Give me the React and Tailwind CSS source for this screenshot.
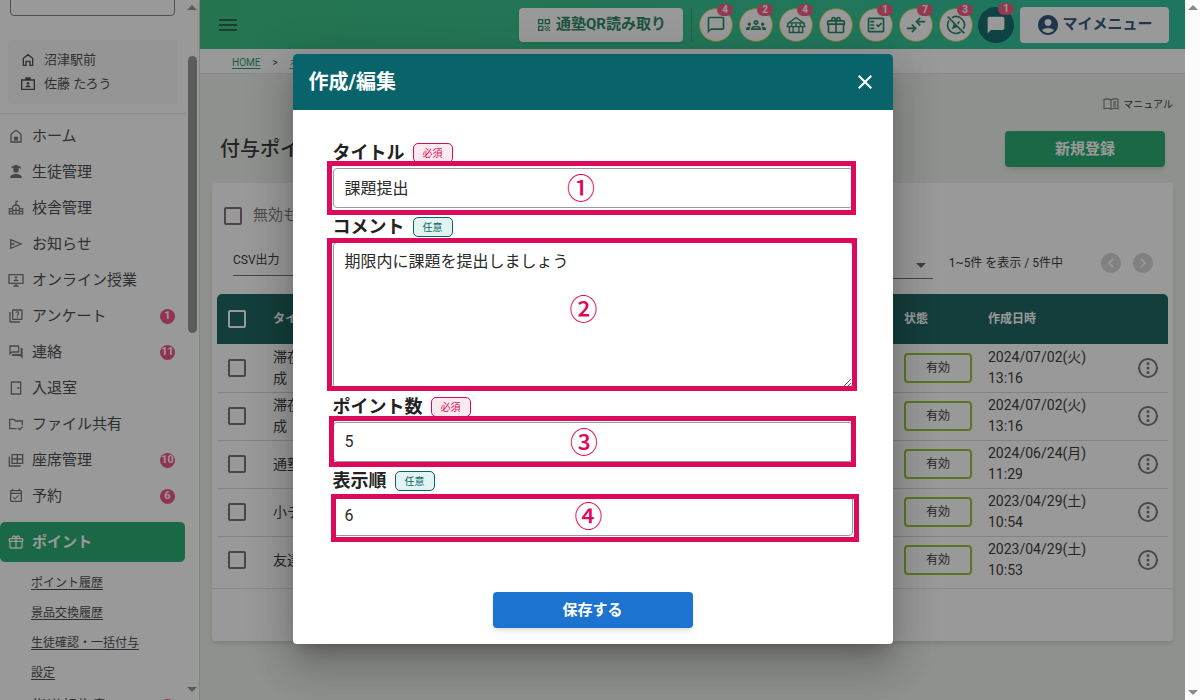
import { useState } from 'react';
import {
    MdMenu, MdOutlineChatBubbleOutline, MdChatBubble, MdOutlineGroups, MdOutlineFactCheck,
    MdAccountCircle, MdOutlineQuiz, MdOutlineForum, MdOutlineSensorDoor, MdOutlineEventAvailable,
    MdClose, MdQrCode, MdArrowDropDown, MdChevronLeft, MdChevronRight,
} from 'react-icons/md';

const Svg = ({ children, className = 'w-4 h-4', width = 2 }) => (
    <svg viewBox="0 0 24 24" className={className} fill="none" stroke="currentColor" strokeWidth={width} aria-hidden="true">
        {children}
    </svg>
);

const HouseIcon = ({ className }) => (
    <Svg className={className}>
        <path d="M5 20V9.500L12 4l7 5.500V20h-4v-6H9v6z" />
    </Svg>
);

const HomeIcon = () => (
    <Svg>
        <path d="M4.500 21V9.500L12 3.500l7.500 6V21z" />
        <path d="M9 13h6v6H9z" fill="currentColor" stroke="none" />
    </Svg>
);

const NameTagIcon = ({ className }) => (
    <Svg className={className}>
        <path d="M2.500 6h19v14h-19z" />
        <path d="M8 2h8v4H8z" fill="currentColor" stroke="none" />
        <circle cx="12" cy="11" r="2" fill="currentColor" stroke="none" />
        <path d="M8 17c0-4 8-4 8 0z" fill="currentColor" stroke="none" />
    </Svg>
);

const StudentIcon = () => (
    <Svg>
        <g fill="currentColor" stroke="none">
            <path d="M12 1l8 3.500-1 .5v3h-1V5.500L16 6.500V9a4 4 0 0 1-8 0V6.500L4 4.500z" />
            <path d="M3 21c0-8 18-8 18 0z" />
        </g>
    </Svg>
);

const SchoolIcon = () => (
    <Svg width="1.8">
        <path d="M2 21v-8h5v-3l5-3.500 5 3.500v3h5v8zM7 13v8M17 13v8M2 17h5M17 17h5M12 6.500V2h3M12 11v10M7 15.500h10" />
    </Svg>
);

const SendIcon = () => (
    <Svg>
        <path d="M4 5.500L19.500 12 4 18.500zM4 12h6" />
    </Svg>
);

const MonitorIcon = () => (
    <Svg>
        <path d="M1.500 4h21v13h-21zM8 21h8M12 17v4" />
        <circle cx="12" cy="8" r="1.800" fill="currentColor" stroke="none" />
        <path d="M8 14c0-3.500 8-3.500 8 0z" fill="currentColor" stroke="none" />
    </Svg>
);

const FolderIcon = () => (
    <Svg>
        <path d="M13 19H2.500V5H9l2 2.500h10.500V14M15 18l2.500 2.500L22 16" />
    </Svg>
);

const SeatIcon = () => (
    <Svg>
        <path d="M6 4h16v13H6zM6 10.500h16M14 4v13M2 7v14h17" />
    </Svg>
);

const GiftIcon = ({ className = 'w-4 h-4' }) => (
    <svg viewBox="0 0 24 24" className={className} fill="currentColor" aria-hidden="true">
        <path d="M22,12V20A2,2 0 0,1 20,22H4A2,2 0 0,1 2,20V12A1,1 0 0,1 1,11V8A2,2 0 0,1 3,6H6.170C6.060,5.690 6,5.350 6,5A3,3 0 0,1 9,2C10,2 10.880,2.500 11.430,3.240V3.230L12,4L12.570,3.230V3.240C13.120,2.500 14,2 15,2A3,3 0 0,1 18,5C18,5.350 17.940,5.690 17.830,6H21A2,2 0 0,1 23,8V11A1,1 0 0,1 22,12M4,20H11V12H4V20M20,20V12H13V20H20M9,4A1,1 0 0,0 8,5A1,1 0 0,0 9,6A1,1 0 0,0 10,5A1,1 0 0,0 9,4M15,4A1,1 0 0,0 14,5A1,1 0 0,0 15,6A1,1 0 0,0 16,5A1,1 0 0,0 15,4M3,8V10H11V8H3M13,8V10H21V8H13Z" />
    </svg>
);

const ShopIcon = () => (
    <Svg className="w-5 h-5" width="1.6">
        <path d="M3 9.500L12 3l9 6.500zM3 9.500L1.500 14h21L21 9.500M7.500 9.500L6.500 14M12 9.500V14M16.500 9.500l1 4.500M4 14v7h16v-7M8.500 14v7M15.500 14v7" />
    </Svg>
);

const ArrowsIcon = () => (
    <Svg className="w-5 h-5">
        <path d="M1 16h10M7 11.500l4.500 4.500L7 20.500M23 8H13M17 3.500L12.500 8l4.500 4.500" />
    </Svg>
);

const CompassOffIcon = () => (
    <Svg className="w-5 h-5">
        <path d="M7 3.300A10 10 0 0 1 20.800 16.800M17.500 20.400A10 10 0 0 1 3.600 6.500M2 2l20 20" />
        <path d="M7 17l2.500-7 4.500 4.500zM13 9l4-2-2 4.500z" fill="currentColor" stroke="none" />
    </Svg>
);

const BookIcon = () => (
    <Svg className="w-4 h-4" width="1.6">
        <path d="M12 6C9 4 5 4 1.500 5v14c3.500-1 7.500-1 10.500 1 3-2 7-2 10.500-1V5C19 4 15 4 12 6zM12 6v14M15 9.500c2-.7 3.500-.7 5-.5M15 12.500c2-.7 3.500-.7 5-.5M15 15.500c2-.7 3.500-.7 5-.5" />
    </Svg>
);

const MoreIcon = () => (
    <svg viewBox="0 0 24 24" className="w-6 h-6" fill="none" stroke="currentColor" strokeWidth="2" aria-hidden="true">
        <circle cx="12" cy="12" r="9" />
        <g fill="currentColor" stroke="none">
            <circle cx="12" cy="7.500" r="1.500" />
            <circle cx="12" cy="12" r="1.500" />
            <circle cx="12" cy="16.500" r="1.500" />
        </g>
    </svg>
);

const ScrollUp = () => (
    <svg viewBox="0 0 10 5" className="w-[10px] h-[5px] shrink-0" fill="currentColor" aria-hidden="true"><path d="M5 0l5 5H0z" /></svg>
);

const ScrollDown = () => (
    <svg viewBox="0 0 10 5" className="w-[10px] h-[5px] shrink-0" fill="currentColor" aria-hidden="true"><path d="M0 0h10L5 5z" /></svg>
);

const navItems = [
    { name: 'ホーム', icon: <HomeIcon /> },
    { name: '生徒管理', icon: <StudentIcon /> },
    { name: '校舎管理', icon: <SchoolIcon /> },
    { name: 'お知らせ', icon: <SendIcon /> },
    { name: 'オンライン授業', icon: <MonitorIcon /> },
    { name: 'アンケート', icon: <MdOutlineQuiz className="w-4 h-4" />, count: 1 },
    { name: '連絡', icon: <MdOutlineForum className="w-4 h-4" />, count: 11 },
    { name: '入退室', icon: <MdOutlineSensorDoor className="w-4 h-4" /> },
    { name: 'ファイル共有', icon: <FolderIcon /> },
    { name: '座席管理', icon: <SeatIcon />, count: 10 },
    { name: '予約', icon: <MdOutlineEventAvailable className="w-4 h-4" />, count: 6 },
];

const subItems = ['ポイント履歴', '景品交換履歴', '生徒確認・一括付与', '設定'];

const shortcuts = [
    { name: 'チャット', icon: <MdOutlineChatBubbleOutline className="w-5 h-5" />, count: 4 },
    { name: '生徒', icon: <MdOutlineGroups className="w-5 h-5" />, count: 2 },
    { name: '校舎', icon: <ShopIcon />, count: 4 },
    { name: '景品', icon: <GiftIcon className="w-5 h-5" /> },
    { name: '確認', icon: <MdOutlineFactCheck className="w-5 h-5" />, count: 1 },
    { name: '入退室', icon: <ArrowsIcon />, count: 7 },
    { name: '未対応', icon: <CompassOffIcon />, count: 3 },
];

const rows = [
    { id: 1, title: '滞在時間達成', day: '2024/07/02(火)', time: '13:16' },
    { id: 2, title: '滞在時間達成', day: '2024/07/02(火)', time: '13:16' },
    { id: 3, title: '通塾', day: '2024/06/24(月)', time: '11:29' },
    { id: 4, title: '小テスト', day: '2023/04/29(土)', time: '10:54' },
    { id: 5, title: '友達紹介', day: '2023/04/29(土)', time: '10:53' },
];

const NavBadge = ({ count }) => (
    <span className="ml-auto w-[15px] h-[15px] rounded-full bg-[#f0447a] text-white text-[11px] font-bold flex items-center justify-center">
        {count}
    </span>
);

const Sidebar = () => (
    <aside className="w-[200px] shrink-0 flex bg-white border-r border-[#d5d8d5] overflow-hidden text-[#3c3c3c]">
        <div className="flex-1 min-w-0 flex flex-col">
            <div className="h-4 shrink-0 flex items-end overflow-hidden mx-[10px]">
                <button className="w-full h-9 shrink-0 border border-[#777] rounded text-[13px]" aria-label="校舎選択"></button>
            </div>
            <div className="mx-2 mt-6 h-16 shrink-0 rounded bg-[#f8f8f8] px-3 flex flex-col justify-center text-[13px]">
                <div className="flex items-center gap-2 h-6"><HouseIcon className="w-4 h-4" />沼津駅前</div>
                <div className="flex items-center gap-2 h-6"><NameTagIcon className="w-4 h-4" />佐藤 たろう</div>
            </div>
            <nav className="mt-[9px] border-t border-[#dedede] pt-1">
                <ul>
                    {navItems.map((item) => (
                        <li key={item.name}>
                            <a href="#" className="h-9 pl-2 pr-[10px] flex items-center gap-2 text-[15px]">
                                <span className="text-[#6a6a6a]">{item.icon}</span>
                                {item.name}
                                {item.count && <NavBadge count={item.count} />}
                            </a>
                        </li>
                    ))}
                </ul>
                <a href="#" className="mt-2 h-10 pl-2 rounded-[5px] bg-[#15a566] text-white flex items-center gap-2 text-[15px] font-bold">
                    <GiftIcon />
                    ポイント
                </a>
                <ul className="mt-[6px] text-xs">
                    {subItems.map((name) => (
                        <li key={name} className="h-[30px] pl-[31px] flex items-center">
                            <a href="#" className="underline underline-offset-2">{name}</a>
                        </li>
                    ))}
                </ul>
                <a href="#" className="h-9 pl-2 pr-[10px] flex items-center gap-2 text-[15px]">
                    <MdOutlineFactCheck className="w-4 h-4 text-[#6a6a6a]" />
                    指導報告書
                    <NavBadge count={2} />
                </a>
            </nav>
        </div>
        <div className="w-[14px] shrink-0 pt-[5px] pb-2 flex flex-col items-center text-[#8d8d8d]">
            <ScrollUp />
            <div className="mt-[46px] w-[9px] h-[277px] rounded-full bg-[#8d908d]"></div>
            <div className="mt-auto"><ScrollDown /></div>
        </div>
    </aside>
);

const Header = () => (
    <header className="h-[49px] shrink-0 bg-gradient-to-r from-[#2abb78] to-[#1cbf96] flex items-center px-4 text-[#168058] shadow">
        <button aria-label="メニュー" className="text-[#20543e]"><MdMenu className="w-6 h-6" /></button>
        <button className="ml-auto h-[34px] w-[164px] bg-white rounded shadow flex items-center justify-center gap-1 text-[15px] font-bold">
            <MdQrCode className="w-4 h-4" />
            通塾QR読み取り
        </button>
        <div className="ml-2 h-[34px] border-l border-[#219a68]"></div>
        <div className="ml-[7px] flex items-center gap-[6px]">
            {shortcuts.map((item) => (
                <button key={item.name} aria-label={item.name} className="relative w-[34px] h-[34px] rounded-full bg-white border border-[#b5c832] flex items-center justify-center">
                    {item.icon}
                    {item.count && (
                        <span className="absolute -top-[5px] -right-px w-4 h-3 rounded-full bg-[#f4507f] text-white text-[10px] leading-3 font-bold">{item.count}</span>
                    )}
                </button>
            ))}
            <button aria-label="メッセージ" className="relative w-9 h-9 -ml-px rounded-full bg-[#006060] text-white flex items-center justify-center">
                <MdChatBubble className="w-5 h-5" />
                <span className="absolute -top-1 right-0 w-4 h-3 rounded-full bg-[#f4507f] text-white text-[10px] leading-3 font-bold">1</span>
            </button>
            <button className="h-9 w-[149px] bg-white rounded flex items-center justify-center gap-[2px] text-[15px] font-bold text-[#22466e]">
                <MdAccountCircle className="w-6 h-6" />
                マイメニュー
            </button>
        </div>
    </header>
);

const box = 'block appearance-none w-[18px] h-[18px] rounded-[2px] border-2';

const PointTable = () => (
    <table className="w-full table-fixed text-left">
        <colgroup>
            <col className="w-10" />
            <col className="w-[102px]" />
            <col />
            <col className="w-[84px]" />
            <col className="w-[156px]" />
            <col className="w-10" />
        </colgroup>
        <thead>
            <tr className="h-[50px] bg-[#0a5754] text-white text-xs font-bold">
                <th className="pl-[11px] rounded-tl-[5px]"><input type="checkbox" aria-label="すべて選択" className={`${box} border-white`} /></th>
                <th className="px-4">タイトル</th>
                <th className="px-4">コメント</th>
                <th className="pl-4">状態</th>
                <th className="pl-4">作成日時</th>
                <th className="rounded-tr-[5px]"></th>
            </tr>
        </thead>
        <tbody>
            {rows.map((row) => (
                <tr key={row.id} className="h-12 border-b border-[#d6d6d6] last:border-b-0 text-sm leading-[21px]">
                    <td className="pl-[11px]"><input type="checkbox" aria-label={row.title} className={`${box} border-[#6d6468]`} /></td>
                    <td className="px-4">{row.title}</td>
                    <td></td>
                    <td className="pl-4">
                        <span className="h-[30px] flex items-center justify-center border-2 border-[#87be2b] rounded text-xs">有効</span>
                    </td>
                    <td className="pl-4">{row.day}<br />{row.time}</td>
                    <td className="text-[#6b6b6b]">
                        <button aria-label="操作" className="block mx-auto"><MoreIcon /></button>
                    </td>
                </tr>
            ))}
        </tbody>
    </table>
);

const Content = () => (
    <main className="flex-1 min-h-0 overflow-hidden flex flex-col bg-[#edf1eb] text-[#2a2a2a]">
        <div className="h-[25px] shrink-0 bg-white border-b border-[#dcdfdb] pl-8 pt-[2px] flex items-center gap-3 text-[10px]">
            <a href="#" className="underline underline-offset-2 text-[#12946a]">HOME</a>
            <span>&gt;</span>
            <a href="#" className="underline underline-offset-2 text-[#12946a]">ポイント</a>
        </div>
        <div className="px-3 pt-5 flex justify-end">
            <a href="#" className="h-5 flex items-center gap-1 text-[10px]">
                <span className="text-[#666]"><BookIcon /></span>
                マニュアル
            </a>
        </div>
        <div className="px-5 mt-[17px] flex items-center justify-between">
            <h1 className="text-xl font-medium">付与ポイント</h1>
            <button className="w-40 h-9 rounded bg-[#15a566] text-white text-[15px] font-bold shadow-md">新規登録</button>
        </div>
        <section className="mx-3 mt-4 bg-white rounded shadow-md">
            <label className="h-[65px] pl-3 flex items-center gap-[11px] text-[15px] text-[#707070]">
                <input type="checkbox" className={`${box} border-[#6d6468]`} />
                無効も表示
            </label>
            <div className="h-[46px] pl-[21px] pr-5 flex items-end text-xs">
                <button className="w-40 h-8 mb-[18px] text-left border-b border-[#666]">CSV出力</button>
                <div className="ml-auto mb-[15px] w-24 h-8 border-b border-[#666] relative">
                    <select aria-label="表示件数" defaultValue="20" className="w-full h-8 pl-2 appearance-none">
                        <option>20</option>
                    </select>
                    <MdArrowDropDown className="absolute right-0 top-[6px] w-6 h-6 text-[#555]" />
                </div>
                <span className="ml-4 mb-[15px] h-8 flex items-center">1~5件 を表示 / 5件中</span>
                <div className="ml-[38px] mb-[15px] h-8 flex items-center gap-3 text-white">
                    <button aria-label="前へ" className="w-5 h-5 rounded-full bg-[#d2d2d2]"><MdChevronLeft className="w-5 h-5" /></button>
                    <button aria-label="次へ" className="w-5 h-5 rounded-full bg-[#d2d2d2]"><MdChevronRight className="w-5 h-5" /></button>
                </div>
            </div>
            <div className="px-[5px] pb-1">
                <PointTable />
            </div>
            <div className="h-[53px] border-t border-[#e2e2e2]"></div>
        </section>
    </main>
);

// ピンクの枠と番号を入力欄に重ねて表示する
const Callout = ({ mark, className }) => (
    <div className={`absolute border-[5px] border-[#dc0a5a] text-[#dc0a5a] text-[28px] leading-none font-medium flex items-center justify-center pointer-events-none ${className}`}>
        {mark}
    </div>
);

const Field = ({ id, label, required, mark, callout, children }) => (
    <div>
        <div className="h-[30px] flex items-center gap-2">
            <label htmlFor={id} className="text-lg leading-6 font-bold text-[#222]">{label}</label>
            {required ? (
                <span className="w-10 h-5 flex items-center justify-center rounded-[5px] border border-[#dc0a5a] bg-[#fdeaf1] text-[#dc0a5a] text-[10px]">必須</span>
            ) : (
                <span className="w-10 h-5 flex items-center justify-center rounded-[5px] border border-[#08646a] bg-[#e2f4f0] text-[#08646a] text-[10px]">任意</span>
            )}
        </div>
        <div className="relative">
            {children}
            <Callout mark={mark} className={callout} />
        </div>
    </div>
);

const control = 'block w-full px-[11px] border border-[#999] rounded text-base text-[#2a2a2a]';

const EditDialog = () => {
    const [form, setForm] = useState({ title: '課題提出', comment: '期限内に課題を提出しましょう', point: '5', order: '6' });
    const onChange = (e) => setForm({ ...form, [e.target.name]: e.target.value });

    return (
        <div role="dialog" aria-labelledby="dialog-title" className="w-[600px] max-w-full bg-white rounded overflow-hidden shadow-[0_11px_15px_-7px_rgba(0,0,0,0.2),0_24px_38px_3px_rgba(0,0,0,0.14),0_9px_46px_8px_rgba(0,0,0,0.12)]">
            <div className="h-14 px-4 bg-[#08646a] text-white flex items-center justify-between">
                <h2 id="dialog-title" className="text-xl font-bold">作成/編集</h2>
                <button aria-label="閉じる"><MdClose className="w-6 h-6" /></button>
            </div>
            <form className="px-10 pt-7 pb-4" onSubmit={(e) => e.preventDefault()}>
                <div className="flex flex-col gap-1">
                    <Field id="title" label="タイトル" required mark="①" callout="-left-[6px] -right-[3px] -top-[7px] -bottom-[7px] pr-5 pt-1">
                        <input id="title" name="title" value={form.title} onChange={onChange} className={`${control} h-10 pb-[2px]`} />
                    </Field>
                    <Field id="comment" label="コメント" mark="②" callout="-left-[6px] -right-1 -top-1 -bottom-[3px] pr-4 pb-2">
                        <textarea id="comment" name="comment" value={form.comment} onChange={onChange} className={`${control} h-[146px] pt-[7px]`} />
                    </Field>
                    <Field id="point" label="ポイント数" required mark="③" callout="-left-1 -right-[3px] -top-[6px] -bottom-[5px] pr-4 pt-1">
                        <input id="point" name="point" value={form.point} onChange={onChange} className={`${control} h-10 pb-[2px]`} />
                    </Field>
                    <Field id="order" label="表示順" mark="④" callout="-left-[2px] -right-[6px] -top-[2px] -bottom-[6px] pr-3">
                        <input id="order" name="order" value={form.order} onChange={onChange} className={`${control} h-10 pb-[2px]`} />
                    </Field>
                </div>
                <button type="submit" className="mt-14 mx-auto block w-[200px] h-9 rounded bg-[#1c73d0] text-white text-[15px] font-bold shadow-md">保存する</button>
            </form>
        </div>
    );
};

const App = () => {
    return (
        <div className="h-screen flex bg-white overflow-hidden font-[Roboto,'Noto_Sans_CJK_JP',sans-serif]">
            <div className="flex-1 min-w-0 relative flex">
                <Sidebar />
                <div className="flex-1 min-w-0 flex flex-col">
                    <Header />
                    <Content />
                </div>
                <div className="absolute inset-0 bg-[#212121]/46 flex items-center justify-center pb-[2px]">
                    <EditDialog />
                </div>
            </div>
            <div className="w-[15px] shrink-0 py-[5px] bg-[#fcfcfc] flex flex-col items-center justify-between text-[#8a8a8a]">
                <ScrollUp />
                <ScrollDown />
            </div>
        </div>
    );
};

export default App;
